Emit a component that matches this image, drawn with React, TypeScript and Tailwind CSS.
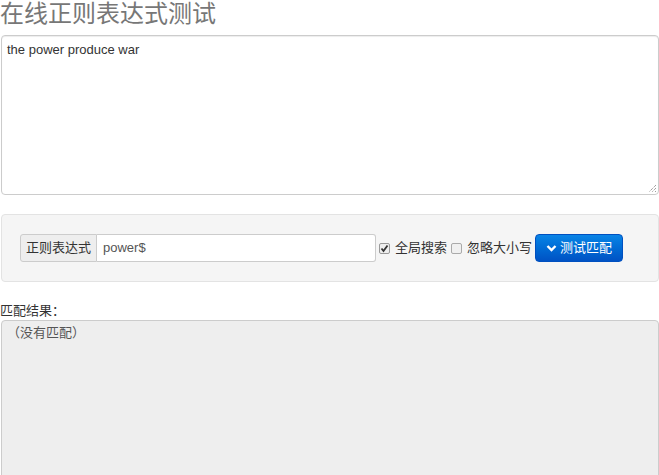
import React from "react";

export default function App() {
  const font = { fontFamily: '"Liberation Sans", Arial, "Noto Sans CJK SC", sans-serif' };
  return (
    <div className="w-[659px] h-[475px] overflow-hidden bg-white text-[#333]" style={font}>
      <h1 className="text-[24px] leading-[28px] text-[#777] font-normal pt-[0px] h-[35px] whitespace-nowrap">
        在线正则表达式测试
      </h1>
      <div className="ml-[1px] w-[658px] h-[160px] border border-[#ccc] rounded-[4px] shadow-[inset_0_1px_1px_rgba(0,0,0,0.075)] relative">
        <div className="px-[5px] pt-[5px] text-[13px] leading-[17px] text-[#333]">the power produce war</div>
        <svg className="absolute right-[1px] bottom-[1px]" width="9" height="9" viewBox="0 0 9 9">
          <path d="M8 1 L1 8 M8 4 L4 8 M8 7 L7 8" stroke="#777" strokeWidth="1" strokeDasharray="1 1" />
        </svg>
      </div>
      <div className="mt-[19px] ml-[1px] w-[658px] h-[68px] bg-[#f5f5f5] border border-[#e3e3e3] rounded-[4px] flex items-center pl-[18px]">
        <div className="flex h-[28px]">
          <div className="w-[77px] flex items-center justify-center bg-[#eee] border border-[#ccc] rounded-l-[3px] text-[13px] text-[#333]">
            正则表达式
          </div>
          <div className="w-[279px] flex items-center bg-white border border-l-0 border-[#ccc] rounded-r-[3px] px-[6px] text-[13px] text-[#555]">
            power$
          </div>
        </div>
        <div className="flex items-center ml-[3px] text-[13px] text-[#333]">
          <span className="w-[11px] h-[11px] border border-[#999] rounded-[2px] bg-[#eee] flex items-center justify-center">
            <svg width="9" height="9" viewBox="0 0 9 9">
              <path d="M1.5 4.5 L3.5 7 L7.5 1.5" stroke="#333" strokeWidth="1.8" fill="none" />
            </svg>
          </span>
          <span className="ml-[5px]">全局搜索</span>
          <span className="ml-[4px] w-[11px] h-[11px] border border-[#aaa] rounded-[2px] bg-[#f0f0f0]"></span>
          <span className="ml-[5px]">忽略大小写</span>
        </div>
        <button className="ml-[3px] w-[88px] h-[28px] rounded-[4px] border border-[#0050c0] bg-gradient-to-b from-[#0a84e6] to-[#0052c4] text-white text-[13px] flex items-center justify-center gap-[3px]">
          <svg width="11" height="9" viewBox="0 0 11 9">
            <path d="M1.5 2 L5.5 6 L9.5 2" stroke="white" strokeWidth="2.4" fill="none" />
          </svg>
          测试匹配
        </button>
      </div>
      <div className="mt-[20px] text-[13px] leading-[18px] text-[#333]">匹配结果：</div>
      <div className="ml-[1px] w-[658px] h-[200px] bg-[#eee] border border-[#ccc] rounded-[4px] px-[5px] pt-[2px] text-[13px] text-[#555]">
        （没有匹配）
      </div>
    </div>
  );
}
